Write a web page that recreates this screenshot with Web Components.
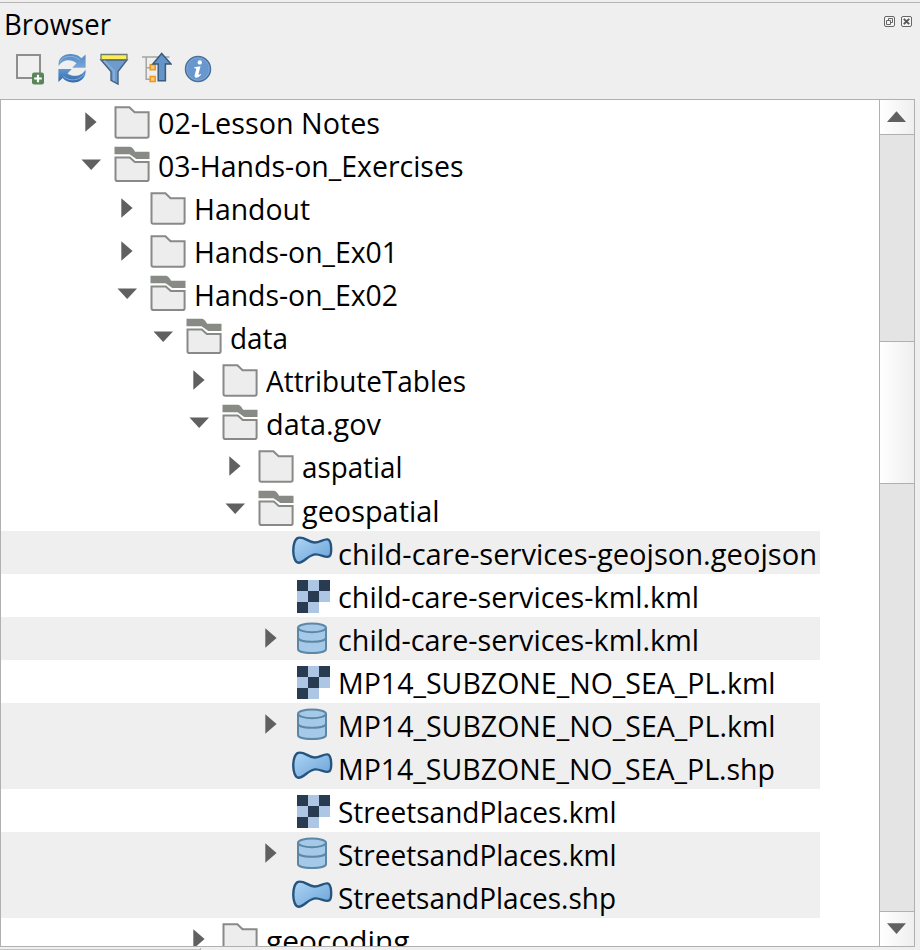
<!DOCTYPE html>
<html lang="en">
<head>
<meta charset="utf-8">
<title>Browser</title>
<style>
html,body{margin:0;height:100%;overflow:hidden}
body{background:#efefef;color:#000;font-family:"Open Sans","Noto Sans",sans-serif}
</style>
</head>
<body>
<browser-panel></browser-panel>
<script>
const svg = (w, h, body) => `<svg width="${w}" height="${h}" viewBox="0 0 ${w} ${h}" xmlns="http://www.w3.org/2000/svg">${body}</svg>`;

const ICONS = {
  closed: svg(42, 43, `<path d="M3.5 6.2H17.4L22.6 11.2H36.6V35Q36.6 36.8 34.8 36.8H5.3Q3.5 36.8 3.5 35Z" fill="#ededed" stroke="#888a87" stroke-width="2"/>`),
  open: svg(42, 43, `<path d="M2.5 2.8H18.1Q20.8 3.5 23.1 7.8H37.5V15H24.3L17.6 10.3H2.5Z" fill="#888a85"/><path d="M3.5 13.6H17.8L22.8 18.1H36.6V35.2Q36.6 37 34.8 37H5.3Q3.5 37 3.5 35.2Z" fill="#ededed" stroke="#888a87" stroke-width="2"/>`),
  vector: svg(42, 43, `<defs><linearGradient id="g" x1="0" y1="0" x2="1" y2="1"><stop offset="0" stop-color="#b0d5f5"/><stop offset="1" stop-color="#68a2d7"/></linearGradient></defs><path d="M6.2 6.8C12.5 5.2 16 11.3 22.5 11.5C27.5 11.7 31.5 7.8 35.5 8.4C40 9.3 40 23 37.4 25.3C34 27.7 29 23 23 23.4C16 24 12 32 6.6 31.8C-0.5 31.1-0.4 8.5 6.2 6.8Z" fill="url(#g)" stroke="#25557f" stroke-width="2.4"/>`),
  raster: svg(42, 43, `<path d="M5 6H38V28H27V39H5Z" fill="#adc6e4"/><path d="M5 6h11v11H5zM27 6h11v11H27zM16 17h11v11H16zM5 28h11v11H5z" fill="#293b51"/>`),
  db: svg(42, 43, `<path d="M6 11V32C6 34.5 12 36 20 36S34 34.5 34 32V11" fill="#a4c9e9" stroke="#5d87a5" stroke-width="2"/><ellipse cx="20" cy="10.8" rx="14" ry="4.4" fill="#a4c9e9" stroke="#5d87a5" stroke-width="2"/><path d="M6 20.5C6 23.2 12 24.8 20 24.8S34 23.2 34 20.5" fill="none" stroke="#5d87a5" stroke-width="2"/>`)
};

class FitLabel extends HTMLElement {
  connectedCallback() {
    this.attachShadow({mode: 'open'}).innerHTML = `<style>
      :host{display:block;white-space:pre}
      span{display:inline-block;transform-origin:0 50%}
    </style><span><slot></slot></span>`;
    const s = this.shadowRoot.querySelector('span');
    const target = +this.getAttribute('width');
    if (target) s.style.transform = `scaleX(${target / s.getBoundingClientRect().width})`;
  }
}
customElements.define('fit-label', FitLabel);

class TreeRow extends HTMLElement {
  connectedCallback() {
    const state = this.getAttribute('state');
    const arrow = state === 'right' ? '<path d="M5.3 11.3L16.6 21L5.3 30.8Z" fill="#606060"/>'
      : state === 'down' ? '<path d="M1.5 15.5H21L11.2 26Z" fill="#606060"/>' : '';
    this.attachShadow({mode: 'open'}).innerHTML = `<style>
      :host{display:flex;flex:none;box-sizing:border-box;height:43px;width:819px;line-height:43px;font-size:28.8px;
        padding-left:${79 + 36 * this.getAttribute('level')}px}
      :host([shaded]){background:#efefef}
      :host([low]) fit-label{line-height:45px}
      svg{display:block;flex:none}
      .arrow{width:32px}
      .icon{width:46px}
      fit-label{height:43px}
    </style><div class="arrow">${svg(24, 43, arrow)}</div><div class="icon">${ICONS[this.getAttribute('icon')]}</div>
    <fit-label width="${this.getAttribute('fit')}">${this.getAttribute('label')}</fit-label>`;
  }
}
customElements.define('tree-row', TreeRow);

class ToolBar extends HTMLElement {
  connectedCallback() {
    const add = `<rect x="3" y="4" width="23" height="23" fill="#f0f0f0" stroke="#898989" stroke-width="1.9"/><rect x="18" y="21.5" width="12" height="12" rx="2.2" fill="#588658"/><path d="M24 23.7v7.6M20.2 27.5h7.6" stroke="#fff" stroke-width="2.2"/>`;
    const refresh = `<defs><linearGradient id="r" x1="0" y1="0" x2="0" y2="1"><stop offset="0" stop-color="#5389c4"/><stop offset="1" stop-color="#78a7d8"/></linearGradient><linearGradient id="q" x1="0" y1="0" x2="0" y2="1"><stop offset="0" stop-color="#6298cf"/><stop offset="1" stop-color="#3169aa"/></linearGradient></defs><path d="M2.7 15C1.5 7 8 2.8 15 3C20 3.2 23 4.8 25.4 7.3L29.6 3.6V16.8H16.2L20.5 12.3C15 7.5 6.2 8.3 2.7 15Z" fill="url(#r)"/><path d="M29.5 18.5C30.8 26.5 24 32 16.5 31.6C12 31.4 8.8 29.3 6.7 27L2.4 31V18H15.8L11.5 22.4C17 26.5 25.8 25.6 29.5 18.5Z" fill="url(#q)"/><path d="M4 11C7 4.5 17 3.4 23.6 8.8M28 23C24 29.5 14 31 7.5 25.5" fill="none" stroke="#a8c9eb" stroke-width=".9" opacity=".7"/>`;
    const filter = `<path d="M3 9H29L20 20.5V33L13 29.4V20.5Z" fill="#6d9bcd" stroke="#436281" stroke-width="1.4"/><path d="M6 9.5L16 20V30" fill="none" stroke="#83add9" stroke-width="2"/><path d="M3 3.5H29V8.7H3Z" fill="#fcee52" stroke="#6d7d74" stroke-width="1.3"/>`;
    const collapse = `<path d="M2 6H29.5M6.2 6V28.3H13M6.2 16.7H13" fill="none" stroke="#a4a4a4" stroke-width="1.5"/><rect x="10.2" y="13.7" width="5" height="5" fill="#f9cb7b" stroke="#ee9a20" stroke-width="1.6"/><rect x="10.2" y="25.5" width="5" height="5" fill="#f9cb7b" stroke="#ee9a20" stroke-width="1.6"/><path d="M21.7 2.4L31 13H25.4V29.8H18.2V13H12.8Z" fill="#6594c8" stroke="#395b7c" stroke-width="1.5"/>`;
    const info = `<circle cx="16" cy="18" r="12.5" fill="#6797cd" stroke="#476f98" stroke-width="1.5"/><circle cx="16" cy="18" r="11.3" fill="none" stroke="#8aaed8" stroke-width=".7"/><circle cx="17.8" cy="11.4" r="2.2" fill="#fff"/><path d="M12.3 16.2L18.5 15.2L16.5 23Q16.2 24.4 18.8 22.9L19.3 23.6Q17 26.6 14.3 26.7Q11.9 26.4 12.8 23.4L14.3 17.9Q14.3 17 12.2 17.2Z" fill="#fff"/>`;
    this.attachShadow({mode: 'open'}).innerHTML = `<style>
      :host{display:flex;gap:10px;padding:0 14px;height:35px}
      svg{display:block;flex:none}
    </style>${[add, refresh, filter, collapse, info].map(b => svg(32, 36, b)).join('')}`;
  }
}
customElements.define('tool-bar', ToolBar);

class PanelTitle extends HTMLElement {
  connectedCallback() {
    this.attachShadow({mode: 'open'}).innerHTML = `<style>
      :host{display:flex;justify-content:space-between;height:49px;box-sizing:border-box;border-top:1px solid #b4b4b4;
        font-size:28.6px;line-height:42px;padding:0 8px 0 4px}
      .buttons{display:flex;gap:6px;padding-top:13px}
      svg{display:block}
    </style><fit-label width="107"><slot></slot></fit-label>
    <div class="buttons">${svg(11, 11, '<rect x=".5" y=".5" width="10" height="10" rx="1.5" fill="#f5f5f5" stroke="#666"/><path d="M4.5 4V2.5H8.5V6.5H7M2.5 4.5H6.5V8.5H2.5Z" fill="none" stroke="#666"/>')}
    ${svg(11, 11, '<rect x=".5" y=".5" width="10" height="10" rx="1.5" fill="#f5f5f5" stroke="#666"/><path d="M2.8 2.8L8.2 8.2M8.2 2.8L2.8 8.2" stroke="#555" stroke-width="1.9"/>')}</div>`;
  }
}
customElements.define('panel-title', PanelTitle);

class ScrollBar extends HTMLElement {
  connectedCallback() {
    this.attachShadow({mode: 'open'}).innerHTML = `<style>
      :host{display:flex;flex-direction:column;flex:none;width:35px;box-sizing:border-box;border-left:1px solid #b0b0b0;background:#e4e4e4}
      .btn,.thumb{box-sizing:border-box;flex:none;background:linear-gradient(90deg,#fff,#efefef);border:0 solid #b0b0b0}
      .up{height:35px;border-bottom-width:1px}
      .before{height:206px}
      .thumb{height:143px;border-width:1px 0}
      .after{flex:1}
      .down{height:35px;border-top-width:1px}
      svg{display:block}
    </style><div class="btn up">${svg(34, 34, '<path d="M7 22L16.5 11.3L26 22Z" fill="#606060"/>')}</div>
    <div class="before"></div><div class="thumb"></div><div class="after"></div>
    <div class="btn down">${svg(34, 34, '<path d="M7 11.3H26L16.5 22Z" fill="#606060"/>')}</div>`;
  }
}
customElements.define('scroll-bar', ScrollBar);

// level, arrow state, icon, label, label width, shaded
const ROWS = [
  [0, 'right', 'closed', '02-Lesson Notes', 222],
  [0, 'down', 'open', '03-Hands-on_Exercises', 305.5],
  [1, 'right', 'closed', 'Handout', 116],
  [1, 'right', 'closed', 'Hands-on_Ex01', 204],
  [1, 'down', 'open', 'Hands-on_Ex02', 204],
  [2, 'down', 'open', 'data', 58],
  [3, 'right', 'closed', 'AttributeTables', 200],
  [3, 'down', 'open', 'data.gov', 115],
  [4, 'right', 'closed', 'aspatial', 100.5],
  [4, 'down', 'open', 'geospatial', 137.5],
  [5, '', 'vector', 'child-care-services-geojson.geojson', 479, 1],
  [5, '', 'raster', 'child-care-services-kml.kml', 361],
  [5, 'right', 'db', 'child-care-services-kml.kml', 361, 1],
  [5, '', 'raster', 'MP14_SUBZONE_NO_SEA_PL.kml', 437.5],
  [5, 'right', 'db', 'MP14_SUBZONE_NO_SEA_PL.kml', 437.5, 1],
  [5, '', 'vector', 'MP14_SUBZONE_NO_SEA_PL.shp', 437, 1],
  [5, '', 'raster', 'StreetsandPlaces.kml', 278.5],
  [5, 'right', 'db', 'StreetsandPlaces.kml', 278.5, 1],
  [5, '', 'vector', 'StreetsandPlaces.shp', 278, 1],
  [3, 'right', 'closed', 'geocoding', 143.5]
];

class BrowserPanel extends HTMLElement {
  connectedCallback() {
    this.attachShadow({mode: 'open'}).innerHTML = `<style>
      :host{display:flex;flex-direction:column;box-sizing:border-box;width:920px;height:950px;padding-top:2px;overflow:hidden}
      tool-bar{margin-bottom:13px}
      .frame{display:flex;flex:none;box-sizing:border-box;width:915px;height:848px;border:1px solid #b0b0b0;background:#fff}
      .rows{flex:1;min-width:0;display:flex;flex-direction:column;overflow:hidden;padding-top:1px}
      .next{margin-top:1px;box-sizing:border-box;width:201px;height:2px;border-right:1px solid #b0b0b0;border-bottom:1px solid #c4c4c4}
    </style><panel-title>Browser</panel-title><tool-bar></tool-bar>
    <div class="frame"><div class="rows">${ROWS.map((r, i) => `<tree-row level="${r[0]}" state="${r[1]}" icon="${r[2]}" label="${r[3]}" fit="${r[4]}" ${r[5] ? 'shaded' : ''} ${i > 8 ? 'low' : ''}></tree-row>`).join('')}</div><scroll-bar></scroll-bar></div>
    <div class="next"></div>`;
  }
}
customElements.define('browser-panel', BrowserPanel);
</script>
</body>
</html>
